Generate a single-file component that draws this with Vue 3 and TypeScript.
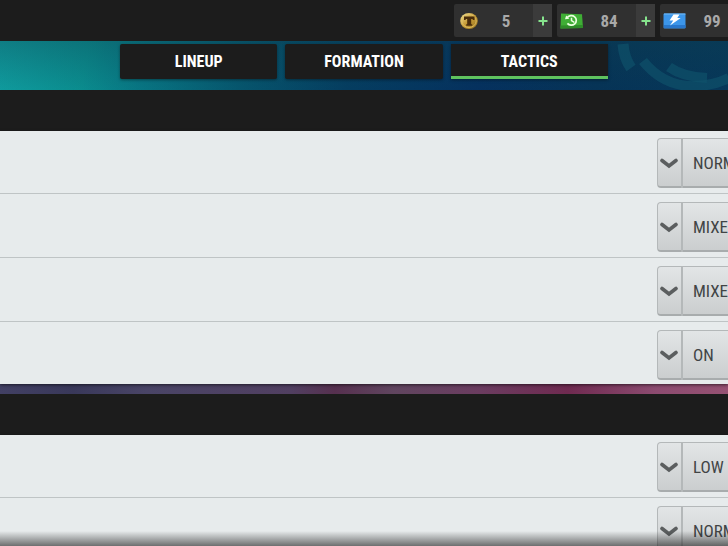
<script setup lang="ts">
import { ref } from 'vue'

type ResourceKind = 'token' | 'cash' | 'energy'

interface Resource {
  kind: ResourceKind
  amount: number
}

interface Setting {
  label: string
  value: string
  options: string[]
}

const resources: Resource[] = [
  { kind: 'token', amount: 5 },
  { kind: 'cash', amount: 84 },
  { kind: 'energy', amount: 99 },
]

const tabs = ['LINEUP', 'FORMATION', 'TACTICS']
const activeTab = ref('TACTICS')

const groups = ref<Setting[][]>([
  [
    { label: 'Mentality', value: 'NORMAL', options: ['NORMAL'] },
    { label: 'Passing focus', value: 'MIXED', options: ['MIXED'] },
    { label: 'Passing style', value: 'MIXED', options: ['MIXED'] },
    { label: 'Counter-attacks', value: 'ON', options: ['ON', 'OFF'] },
  ],
  [
    { label: 'Pressing', value: 'LOW', options: ['LOW'] },
    { label: 'Tackling', value: 'NORMAL', options: ['NORMAL'] },
  ],
])
</script>

<template>
  <div class="screen">
    <header class="topbar">
      <div v-for="item in resources" :key="item.kind" class="resource">
        <span class="resource-icon">
          <svg v-if="item.kind === 'token'" width="18" height="18" viewBox="0 0 18 18" aria-hidden="true">
            <defs>
              <linearGradient id="gold" x1="0" y1="0" x2="1" y2="1">
                <stop offset="0" stop-color="#f6e69a" />
                <stop offset="0.5" stop-color="#c59a35" />
                <stop offset="1" stop-color="#94701f" />
              </linearGradient>
            </defs>
            <ellipse cx="9" cy="9" rx="8.8" ry="8" fill="url(#gold)" />
            <ellipse cx="9" cy="9" rx="7.2" ry="6.5" fill="none" stroke="#e3c66b" stroke-width="0.8" />
            <path d="M4 4.500h10.500v3.500h-1.500l-.6-1H11.200v5.200h1v1.500H6.200v-1.500h1V7H6l-.6 1H4z" fill="#4a2d0b" />
          </svg>
          <svg v-else-if="item.kind === 'cash'" width="23" height="16" viewBox="0 0 23 16" aria-hidden="true">
            <path d="M1 .5L22 1.2 23 15 .5 15.5z" fill="#3fae35" />
            <path d="M.5 12.5L23 12v3L.5 15.5z" fill="#2f8c29" />
            <path d="M7.3 4.5A5 4.8 0 1 1 7.4 10.4" fill="none" stroke="#eaffdf" stroke-width="1.7" />
            <path d="M5 6.2l1.2-3.7 3.1 3.2z" fill="#eaffdf" />
            <path d="M11.5 4.7v3l2.8 1.7" fill="none" stroke="#eaffdf" stroke-width="1.5" />
          </svg>
          <svg v-else width="23" height="16" viewBox="0 0 23 16" aria-hidden="true">
            <rect x="0.5" y="0.5" width="22" height="15" rx="1" fill="#3c96ea" />
            <path d="M1 12h21.5v3H1z" fill="#2877cc" />
            <path d="M1 .5h21.5v1H1z" fill="#72baf5" />
            <path d="M10.500 1.500h6l-2.200 3.500h3.400L7 12.500l3.200-5H6.500z" fill="#fff" />
          </svg>
        </span>
        <span class="amount">{{ item.amount }}</span>
        <button class="add" type="button" :aria-label="'Add ' + item.kind">
          <svg width="10" height="10" viewBox="0 0 10 10" aria-hidden="true">
            <path d="M5 .5v9M.5 5h9" stroke="#86e38d" stroke-width="2" />
          </svg>
        </button>
      </div>
    </header>

    <nav class="tabs">
      <svg class="rings" width="120" height="49" viewBox="0 0 120 49" aria-hidden="true">
        <g fill="none" stroke="#10536b" stroke-opacity="0.65">
          <path d="M15 3q1 14 8 24" stroke-width="11" />
          <path d="M35 20q20 25 50 25q20 0 36-8" stroke-width="10" />
          <path d="M61 26q14 10 38 11" stroke-width="10" />
        </g>
      </svg>
      <div class="tab-list">
        <button
          v-for="tab in tabs"
          :key="tab"
          type="button"
          class="tab"
          :class="{ active: tab === activeTab }"
          @click="activeTab = tab"
        >
          {{ tab }}
        </button>
      </div>
    </nav>

    <main>
      <section v-for="(group, index) in groups" :key="index" class="group">
        <div class="group-head"></div>
        <div class="rows">
          <div v-for="setting in group" :key="setting.label" class="row">
            <div class="picker">
              <select v-model="setting.value" :aria-label="setting.label">
                <option v-for="option in setting.options" :key="option">{{ option }}</option>
              </select>
              <span class="handle">
                <svg width="18" height="12" viewBox="0 0 18 12" aria-hidden="true">
                  <path d="M2 3.500L9 9 16 3.500" fill="none" stroke="#5b5e5f" stroke-width="3.6" stroke-linecap="round" />
                </svg>
              </span>
            </div>
          </div>
        </div>
      </section>
    </main>
    <div class="fade"></div>
  </div>
</template>

<style>
body {
  margin: 0;
  overflow: hidden;
}
</style>

<style scoped>
.screen {
  position: relative;
  height: 100vh;
  overflow: hidden;
  background: #1c1c1c;
  font-family: "Roboto Condensed", "Liberation Sans Narrow", "Liberation Sans", sans-serif;
}

button,
select {
  font-family: inherit;
  border: 0;
  margin: 0;
  cursor: pointer;
}

.topbar {
  display: flex;
  justify-content: flex-end;
  gap: 5px;
  height: 33px;
  padding: 4px 0;
  margin-right: -30px;
}

.resource {
  display: grid;
  grid-template-columns: 29px 1fr 19px;
  width: 98px;
  background: #303030;
  border-radius: 2px;
}

.resource-icon {
  display: flex;
  align-items: center;
  justify-content: center;
}

.amount {
  padding-right: 4px;
  align-self: center;
  text-align: center;
  font-size: 17px;
  line-height: 20px;
  font-weight: 700;
  color: #a9a9a9;
}

.add {
  display: flex;
  align-items: center;
  justify-content: center;
  padding: 0;
  background: #3b3b3b;
}

.tabs {
  position: relative;
  display: flex;
  justify-content: center;
  height: 46px;
  padding-top: 3px;
  background:
    linear-gradient(180deg, rgba(12, 60, 80, 0.4), rgba(4, 35, 80, 0.1)),
    linear-gradient(98deg, #11a9a7 0%, #0b9895 12%, #087e88 20%, #065a70 34%, #054062 48%, #053260 66%, #063557 82%, #07395a 100%);
}

.rings {
  position: absolute;
  top: 0;
  right: 0;
}

.tab-list {
  position: relative;
  display: grid;
  grid-template-columns: repeat(3, 1fr);
  gap: 8px;
  width: 67%;
  height: 35px;
}

.tab {
  padding: 3px 0 0;
  border-bottom: 3px solid #1c1c1c;
  border-radius: 2px;
  background: #1c1c1c;
  box-shadow: 0 1px 3px rgba(0, 0, 0, 0.4);
  color: #fff;
  font-size: 16px;
  line-height: 20px;
  font-weight: 700;
}

.tab.active {
  border-bottom-color: #5fc35f;
  border-radius: 0;
}

.group {
  padding-bottom: 10px;
  background:
    linear-gradient(90deg, #424064 0%, #39385a 10%, #494466 20%, #513f61 40%, #56304f 46%, #60455f 54%, #6b3c60 66%, #6f2a50 78%, #8c4b70 90%, #965273 100%) bottom / 100% 10px no-repeat;
}

.group-head {
  height: 41px;
  background: #1c1c1c;
}

.rows {
  background: #e7ebec;
  box-shadow: 0 1px 3px rgba(0, 0, 0, 0.6);
}

.row {
  display: flex;
  justify-content: flex-end;
  padding: 8px 0 5px;
  border-bottom: 1px solid #bfc4c5;
}

.row:first-child {
  padding-top: 7px;
}

.group:first-child .row:last-child {
  padding-bottom: 4px;
  border-bottom: 0;
}

.picker {
  display: grid;
  grid-template-columns: 26px 1fr;
  width: 171px;
  height: 50px;
  margin-right: -100px;
}

.picker select {
  grid-area: 1 / 1 / 2 / 3;
  width: 100%;
  height: 50px;
  box-sizing: border-box;
  padding: 1px 0 0 35px;
  appearance: none;
  border: 1px solid #b4b8b9;
  border-bottom: 2px solid #a8acad;
  border-radius: 4px;
  background: linear-gradient(180deg, #e2e5e6, #cbcecf);
  color: #414445;
  font-size: 17px;
}

.handle {
  grid-area: 1 / 1;
  z-index: 1;
  display: flex;
  align-items: center;
  justify-content: center;
  border-right: 2px solid #b4b8b9;
  pointer-events: none;
}

.fade {
  position: absolute;
  right: 0;
  bottom: 0;
  left: 0;
  z-index: 2;
  height: 15px;
  background: linear-gradient(180deg, rgba(20, 20, 20, 0), rgba(20, 20, 20, 0.58));
  pointer-events: none;
}
</style>
